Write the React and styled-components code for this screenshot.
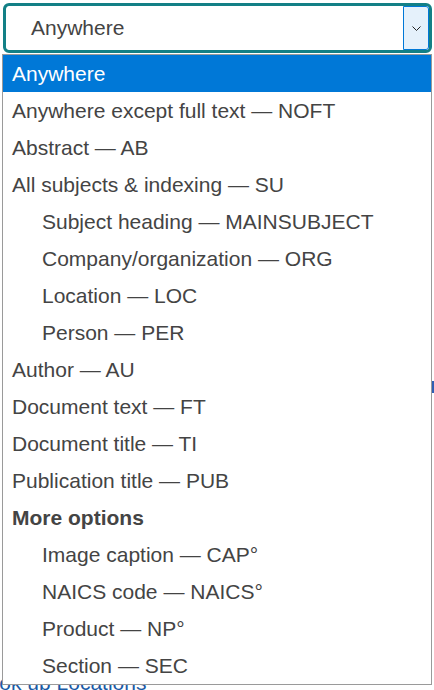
import React from 'react';
import styled, { createGlobalStyle } from 'styled-components';

const GlobalStyle = createGlobalStyle`
  html, body {
    margin: 0;
    padding: 0;
    background: #fff;
  }
  body {
    font-family: "Liberation Sans", Arial, sans-serif;
  }
`;

const Page = styled.div`
  position: relative;
  width: 434px;
  height: 690px;
  overflow: hidden;
`;

const SelectBox = styled.div`
  display: flex;
  align-items: stretch;
  height: 44px;
  margin: 3px 2px 0 3px;
  border: 3px solid #138086;
  border-radius: 6px;
  background: #fff;
`;

const Value = styled.div`
  flex: 1;
  display: flex;
  align-items: center;
  padding-left: 25px;
  font-size: 21px;
  color: #444;
`;

const ArrowButton = styled.div`
  width: 24px;
  display: flex;
  align-items: center;
  justify-content: center;
  background: #e5f1fb;
  border: 1px solid #0078d7;
  border-radius: 0 3px 3px 0;
`;

const Behind = styled.div`
  padding-top: 618px;
`;

const BackLink = styled.a`
  display: block;
  margin-left: -24px;
  font-size: 21px;
  color: #1a5aa6;
  text-decoration: underline;
`;

const EdgeMark = styled.span`
  position: absolute;
  right: 0;
  top: 381px;
  width: 2px;
  height: 12px;
  background: #2f5fb3;
`;

const Listbox = styled.ul`
  position: absolute;
  top: 54px;
  left: 2px;
  width: 428px;
  margin: 0;
  padding: 0;
  list-style: none;
  background: #fff;
  border: 1px solid #9a9a9a;
`;

const Option = styled.li`
  height: 37px;
  display: flex;
  align-items: center;
  padding-left: ${p => (p.$indent ? 39 : 9)}px;
  font-size: 21px;
  font-weight: ${p => (p.$group ? 700 : 400)};
  color: ${p => (p.$selected ? '#fff' : '#444')};
  background: ${p => (p.$selected ? '#0078d7' : 'transparent')};
  white-space: nowrap;
`;

const options = [
  { label: 'Anywhere', selected: true },
  { label: 'Anywhere except full text — NOFT' },
  { label: 'Abstract — AB' },
  { label: 'All subjects & indexing — SU' },
  { label: 'Subject heading — MAINSUBJECT', indent: true },
  { label: 'Company/organization — ORG', indent: true },
  { label: 'Location — LOC', indent: true },
  { label: 'Person — PER', indent: true },
  { label: 'Author — AU' },
  { label: 'Document text — FT' },
  { label: 'Document title — TI' },
  { label: 'Publication title — PUB' },
  { label: 'More options', group: true },
  { label: 'Image caption — CAP°', indent: true },
  { label: 'NAICS code — NAICS°', indent: true },
  { label: 'Product — NP°', indent: true },
  { label: 'Section — SEC', indent: true },
];

export default function App() {
  return (
    <Page>
      <GlobalStyle />
      <SelectBox>
        <Value>Anywhere</Value>
        <ArrowButton>
          <svg width="9" height="5" viewBox="0 0 9 5">
            <path d="M0.5 0.5 L4.5 4.5 L8.5 0.5" fill="none" stroke="#222" strokeWidth="1" />
          </svg>
        </ArrowButton>
      </SelectBox>
      <Behind>
        <BackLink>Look up Locations</BackLink>
      </Behind>
      <EdgeMark />
      <Listbox>
        {options.map(o => (
          <Option
            key={o.label}
            $selected={o.selected}
            $indent={o.indent}
            $group={o.group}
          >
            {o.label}
          </Option>
        ))}
      </Listbox>
    </Page>
  );
}
